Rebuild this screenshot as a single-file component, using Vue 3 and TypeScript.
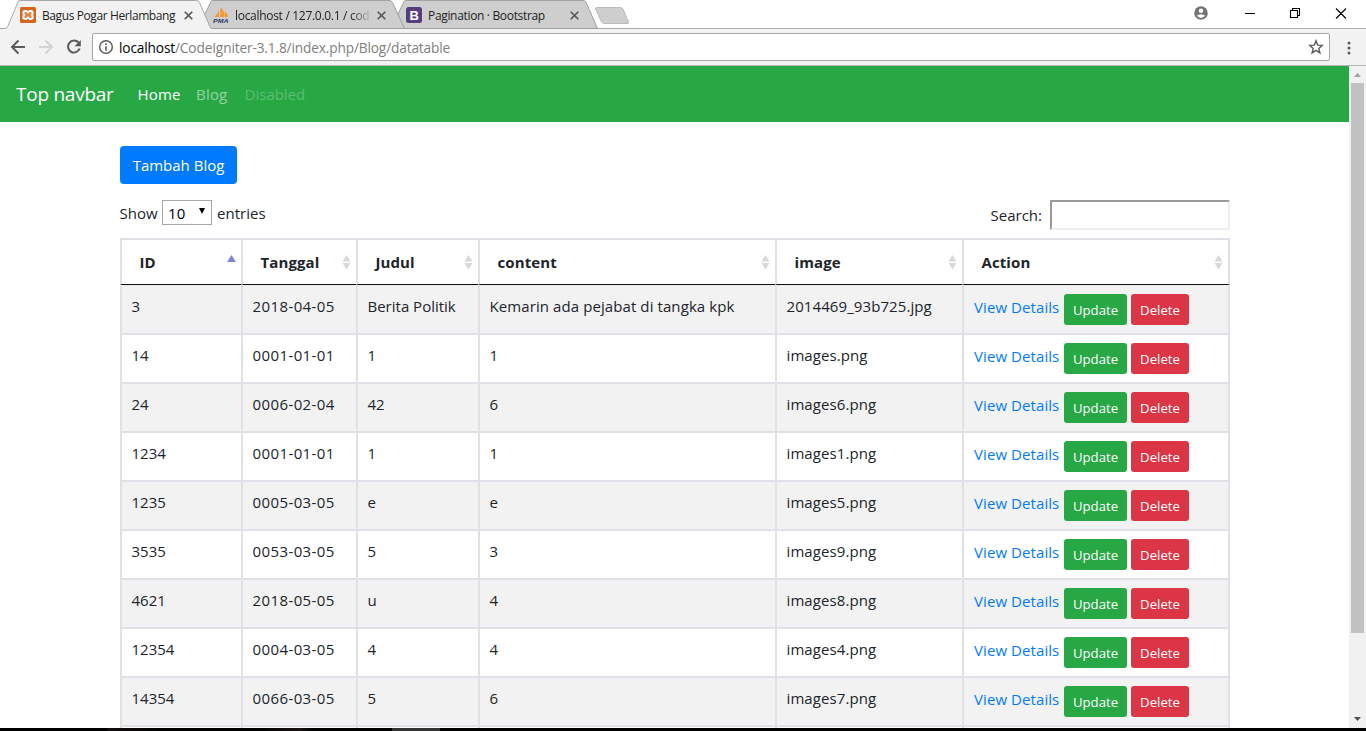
<script setup lang="ts">
interface Post {
  id: string
  tanggal: string
  judul: string
  content: string
  image: string
}

const columns: string[] = ['ID', 'Tanggal', 'Judul', 'content', 'image', 'Action']

const posts: Post[] = [
  { id: '3', tanggal: '2018-04-05', judul: 'Berita Politik', content: 'Kemarin ada pejabat di tangka kpk', image: '2014469_93b725.jpg' },
  { id: '14', tanggal: '0001-01-01', judul: '1', content: '1', image: 'images.png' },
  { id: '24', tanggal: '0006-02-04', judul: '42', content: '6', image: 'images6.png' },
  { id: '1234', tanggal: '0001-01-01', judul: '1', content: '1', image: 'images1.png' },
  { id: '1235', tanggal: '0005-03-05', judul: 'e', content: 'e', image: 'images5.png' },
  { id: '3535', tanggal: '0053-03-05', judul: '5', content: '3', image: 'images9.png' },
  { id: '4621', tanggal: '2018-05-05', judul: 'u', content: '4', image: 'images8.png' },
  { id: '12354', tanggal: '0004-03-05', judul: '4', content: '4', image: 'images4.png' },
  { id: '14354', tanggal: '0066-03-05', judul: '5', content: '6', image: 'images7.png' },
]
</script>

<template>
  <div class="window">
    <header class="tabstrip">
      <svg class="tab-shapes" width="640" height="29" viewBox="0 0 640 29">
        <path d="M0 28.5H640" stroke="#a9a9a9" />
        <path d="M391 28.5L404 1.5Q404.500 .5 406 .5H583Q585 .5 586 2L597.500 28.500Z" fill="#cecece" stroke="#a0a0a0" />
        <path d="M198 28.500L211 1.500Q211.500 .5 213 .5H389Q391.500 .5 392.500 2.500L404.500 28.500Z" fill="#cecece" stroke="#a0a0a0" />
        <path d="M5 28.500Q7 28 7.500 27L18 2Q18.500 .5 20 .5H196Q198.500 .5 199.500 2.500L210 27Q211 28.500 212 28.500V30H5Z" fill="#f2f2f2" stroke="#a9a9a9" />
        <path d="M595.500 9Q595 7.500 597 7.500H620Q622 7.500 623 9L628.500 22Q629 23.500 627 23.500H604.500Q602.500 23.500 601.500 22Z" fill="#cecece" stroke="#bcbcbc" />
      </svg>
      <div class="tab tab-one">
        <svg width="16" height="16" viewBox="0 0 16 16"><rect width="16" height="16" rx="1.500" fill="#d9641c" /><path d="M5.500 4H6.300L8 5.400L9.700 4H10.500Q12.700 4 12.700 6Q12.700 7.200 11.900 8Q12.700 8.800 12.700 10Q12.700 12 10.500 12H9.700L8 10.600L6.300 12H5.500Q3.300 12 3.300 10Q3.300 8.800 4.100 8Q3.300 7.200 3.300 6Q3.300 4 5.500 4Z" fill="#e8823f" stroke="#fff" stroke-width="2" /></svg>
        <span class="tab-title">Bagus Pogar Herlambang</span>
        <svg class="tab-close" width="9" height="9" viewBox="0 0 9 9"><path d="M.7.7l7.600 7.600M8.300.7L.7 8.300" stroke="#555" stroke-width="1.600" /></svg>
      </div>
      <div class="tab tab-two">
        <svg width="16" height="16" viewBox="0 0 16 16"><path d="M6 1Q6 6 1 10H6ZM7.500 0Q12 4 11.500 10H7ZM12 4Q15 7 15 10H12Z" fill="#f59a33" /><text x="0" y="15.500" font-size="6" font-weight="700" font-style="italic" textLength="15.500" lengthAdjust="spacingAndGlyphs" fill="#303763" font-family="Liberation Sans, sans-serif">PMA</text></svg>
        <span class="tab-title faded">localhost / 127.0.0.1 / cod</span>
        <svg class="tab-close" width="9" height="9" viewBox="0 0 9 9"><path d="M.7.7l7.600 7.600M8.300.7L.7 8.300" stroke="#555" stroke-width="1.600" /></svg>
      </div>
      <div class="tab tab-three">
        <svg width="16" height="16" viewBox="0 0 16 16"><rect width="16" height="16" rx="2.500" fill="#563d7c" /><text x="3.500" y="12.800" font-size="13" font-weight="700" fill="#fff" font-family="Liberation Sans, sans-serif">B</text></svg>
        <span class="tab-title">Pagination · Bootstrap</span>
        <svg class="tab-close" width="9" height="9" viewBox="0 0 9 9"><path d="M.7.7l7.600 7.600M8.300.7L.7 8.300" stroke="#555" stroke-width="1.600" /></svg>
      </div>
      <svg class="window-controls" width="166" height="28" viewBox="0 0 166 28">
        <circle cx="10" cy="13" r="6.800" fill="#757575" /><circle cx="10" cy="10.800" r="2.200" fill="#fff" /><path d="M5.800 15.800Q10 12.500 14.200 15.800Q10 20 5.800 15.800Z" fill="#fff" />
        <path d="M54 13.500h10M99.500 10.500h7v7h-7zM101.500 10.500v-2h7v7h-2M145 8.500l10 10M155 8.500l-10 10" fill="none" stroke="#000" stroke-width="1.100" />
      </svg>
    </header>

    <div class="toolbar">
      <svg class="nav-icons" width="92" height="36" viewBox="0 0 92 36">
        <g fill="none" stroke="#5a5a5a" stroke-width="2">
          <path d="M25 18H12.500M18.500 11.500L12 18L18.500 24.500" />
          <path d="M39 18H51.500M45.500 11.500L52 18L45.500 24.500" stroke="#d3d3d3" />
          <path d="M78.500 13.500A6 6 0 1 0 79.700 19.500" />
        </g>
        <path d="M80.800 11v6.200h-6.200Z" fill="#5a5a5a" />
      </svg>
      <div class="omnibox">
        <svg width="16" height="16" viewBox="0 0 16 16"><circle cx="8" cy="8" r="6.300" fill="none" stroke="#5a5a5a" stroke-width="1.400" /><path d="M8 4.300v1.700M8 7.200v4.500" stroke="#5a5a5a" stroke-width="1.600" /></svg>
        <span class="url"><b>localhost</b>/CodeIgniter-3.1.8/index.php/Blog/datatable</span>
        <svg class="star" width="16" height="16" viewBox="0 0 16 16"><path d="M8 1.800l1.700 4.300 4.600.3-3.500 3 1.100 4.500L8 11.400l-3.900 2.500 1.100-4.500-3.500-3 4.600-.3Z" fill="none" stroke="#5a5a5a" stroke-width="1.400" /></svg>
      </div>
      <svg class="menu" width="4" height="14" viewBox="0 0 4 14"><circle cx="2" cy="2" r="1.500" fill="#5a5a5a" /><circle cx="2" cy="7" r="1.500" fill="#5a5a5a" /><circle cx="2" cy="12" r="1.500" fill="#5a5a5a" /></svg>
    </div>

    <div class="viewport">
      <div class="page">
        <nav class="navbar">
          <a class="brand">Top navbar</a>
          <a class="nav-home">Home</a>
          <a class="nav-blog">Blog</a>
          <a class="nav-disabled">Disabled</a>
        </nav>
        <main class="container">
          <button class="btn-primary">Tambah Blog</button>
          <div class="controls">
            <label class="length">Show <span class="select">10<svg width="6" height="6" viewBox="0 0 6 6"><path d="M0 0h6L3 6Z" fill="#000" /></svg></span> entries</label>
            <label class="filter">Search:<input type="text"></label>
          </div>
          <div class="table">
            <div class="row head">
              <div v-for="(c, i) in columns" :key="c" class="cell">
                <span>{{ c }}</span>
                <svg v-if="i === 0" class="sort" width="9" height="14" viewBox="0 0 9 14"><path d="M0 7L4.500 0L9 7Z" fill="#7b83dc" /></svg>
                <svg v-else class="sort" width="9" height="15" viewBox="0 0 9 15"><path d="M.5 6.500L4.500 0L8.500 6.500ZM.5 8L4.500 14.500L8.500 8Z" fill="#d8d8d8" /></svg>
              </div>
            </div>
            <div v-for="p in posts" :key="p.id" class="row">
              <div class="cell">{{ p.id }}</div>
              <div class="cell date">{{ p.tanggal }}</div>
              <div class="cell">{{ p.judul }}</div>
              <div class="cell content">{{ p.content }}</div>
              <div class="cell content">{{ p.image }}</div>
              <div class="cell actions">
                <a class="details">View Details</a>
                <button class="btn update">Update</button>
                <button class="btn delete">Delete</button>
              </div>
            </div>
            <div class="row"><div v-for="c in columns" :key="c" class="cell"></div></div>
          </div>
        </main>
      </div>
      <div class="scrollbar">
        <svg width="17" height="17" viewBox="0 0 17 17"><path d="M5 11L8.500 7L12 11Z" fill="#a3a3a3" /></svg>
        <div class="thumb"></div>
        <svg class="down" width="17" height="17" viewBox="0 0 17 17"><path d="M5 6L8.500 10L12 6Z" fill="#505050" /></svg>
      </div>
    </div>
    <div class="taskbar"></div>
  </div>
</template>

<style>
html, body { margin: 0; overflow: hidden; }
</style>

<style scoped>
* { box-sizing: border-box; }
.window { width: 1366px; height: 731px; display: flex; flex-direction: column; overflow: hidden; background: #fff; font-family: "Open Sans", "Noto Sans", sans-serif; font-size: 15px; color: #212529; }
svg { display: block; flex: none; }
button { font-family: inherit; border: 0; padding: 0; white-space: nowrap; }
.tabstrip { position: relative; flex: none; display: flex; height: 29px; border-bottom: 1px solid #b0b0b0; }
.tab-shapes { position: absolute; left: 0; top: 0; }
.tab { position: relative; display: flex; align-items: center; height: 30px; width: 193px; }
.tab-one { margin-left: 20px; }
.tab-title { width: 137px; margin-left: 6px; font-size: 12px; letter-spacing: -0.4px; color: #222; white-space: nowrap; }
.tab-three .tab-title { letter-spacing: -0.33px; }
.tab .faded { letter-spacing: -0.3px; -webkit-mask-image: linear-gradient(90deg, #000 116px, transparent 137px); mask-image: linear-gradient(90deg, #000 116px, transparent 137px); }
.tab-close { margin-left: 5px; }
.window-controls { margin-left: auto; margin-right: 9px; }
.toolbar { flex: none; display: flex; align-items: center; height: 37px; background: #f2f2f2; border-bottom: 1px solid #b6b6b6; }
.omnibox { display: flex; align-items: center; width: 1238px; height: 28px; padding: 0 5px; border: 1px solid #a6a6a6; border-radius: 2px; background: #fff; }
.url { margin-left: 5px; font-size: 13.700px; letter-spacing: -0.15px; color: #808080; white-space: nowrap; }
.url b { font-weight: 400; color: #000; }
.star { margin-left: auto; }
.menu { margin-left: 17px; margin-top: 1px; }
.viewport { display: flex; flex: 1; min-height: 0; }
.page { width: 1349px; overflow: hidden; }
.navbar { display: flex; align-items: center; height: 56px; padding: 0 16px; background: #28a745; color: #fff; white-space: nowrap; }
.brand { width: 121.500px; font-size: 19px; letter-spacing: -0.25px; }
.nav-home { width: 58.500px; letter-spacing: .15px; }
.nav-blog { width: 48.500px; letter-spacing: .2px; color: rgba(255, 255, 255, .5); }
.nav-disabled { color: rgba(255, 255, 255, .25); }
.container { width: 1110px; margin: 24px 0 0 120px; }
.btn-primary { display: block; width: 117px; height: 38px; border-radius: 4px; background: #007bff; color: #fff; font-size: 15px; }
.controls { display: flex; justify-content: space-between; height: 38px; margin-top: 16px; }
.length { display: flex; align-items: center; height: 26px; gap: 5px; margin-left: -0.5px; }
.select { display: flex; align-items: center; justify-content: space-between; width: 50px; height: 25px; margin: -1px 0 0 -0.5px; padding: 0 6px 0 5px; border: 1px solid #a6a6a6; color: #000; }
.select svg { margin-bottom: 4px; }
.filter { display: flex; align-items: center; height: 30px; }
.filter input { width: 180px; height: 30px; margin-left: 8px; border: 2px inset #eee; background: #fff; }
.table { border-top: 2px solid #dee2e6; }
.row { display: grid; grid-template-columns: 121px 115px 122px 297px 187px 268px; height: 49px; }
.row:nth-child(2) { height: 50px; }
.row:nth-child(even) .cell { background: #f2f2f2; }
.cell { padding: 10px 0 0 9.500px; border-left: 2px solid #dee2e6; border-bottom: 2px solid #dee2e6; line-height: 20px; white-space: nowrap; }
.cell:last-child { border-right: 2px solid #dee2e6; }
.date { letter-spacing: .4px; }
.content { letter-spacing: .09px; }
.head { height: 45px; }
.head .cell { display: flex; align-items: flex-start; justify-content: space-between; padding: 12px 5px 0 17.500px; border-bottom: 1px solid #111; font-weight: 700; letter-spacing: .1px; }
.sort { margin-top: 3px; }
.row .actions { display: flex; align-items: flex-start; padding: 8px 0 0 10px; }
.row:nth-child(2) .cell { border-top: 1px solid #e9ebee; }
.details { width: 90px; margin-top: 3px; letter-spacing: .08px; color: #007bff; }
.btn { height: 31px; border-radius: 3px; color: #fff; font-size: 13.200px; }
.update { width: 63px; background: #28a745; }
.delete { width: 58px; margin-left: 4px; background: #dc3545; }
.scrollbar { display: flex; flex-direction: column; width: 17px; background: #f1f1f1; }
.thumb { width: 13px; height: 550px; margin-left: 2px; background: #c1c1c1; }
.down { margin-top: auto; }
.taskbar { flex: none; height: 3px; background: linear-gradient(90deg, #000 107px, #120d0e 108px, #000 160px, #000 260px, #1a1213 300px, #000 312px, #000 392px, #333 392px, #333 440px, #000 440px); }
</style>
